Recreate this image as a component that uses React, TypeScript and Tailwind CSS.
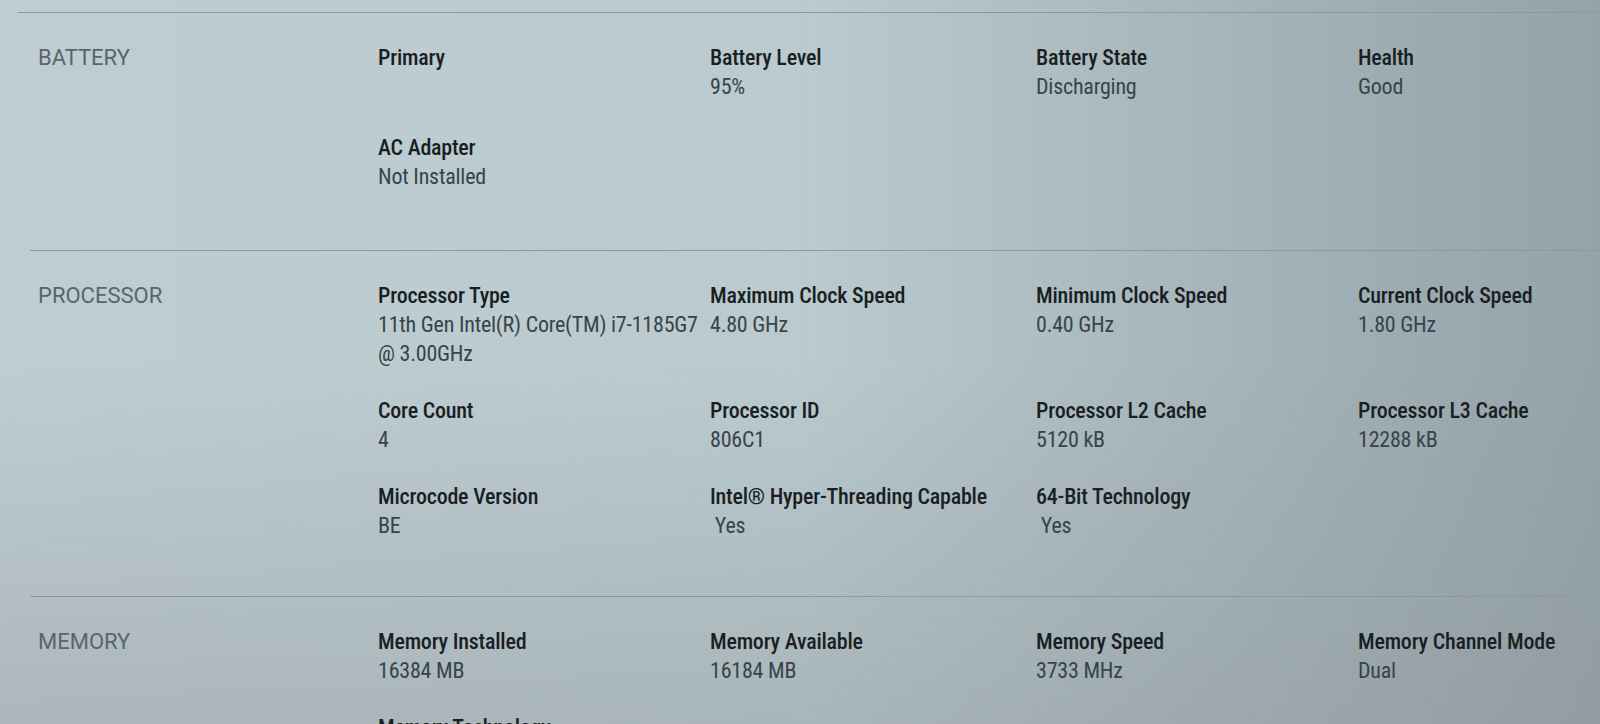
import React from 'react';

interface Field {
  label: string;
  value: string[];
}

interface SectionProps {
  title: string;
  fields: Field[];
  divider?: boolean;
  className?: string;
  gridClassName?: string;
}

const battery: Field[] = [
  { label: 'Primary', value: [] },
  { label: 'Battery Level', value: ['95%'] },
  { label: 'Battery State', value: ['Discharging'] },
  { label: 'Health', value: ['Good'] },
  { label: 'AC Adapter', value: ['Not Installed'] },
];

const processor: Field[] = [
  { label: 'Processor Type', value: ['11th Gen Intel(R) Core(TM) i7-1185G7', '@ 3.00GHz'] },
  { label: 'Maximum Clock Speed', value: ['4.80 GHz'] },
  { label: 'Minimum Clock Speed', value: ['0.40 GHz'] },
  { label: 'Current Clock Speed', value: ['1.80 GHz'] },
  { label: 'Core Count', value: ['4'] },
  { label: 'Processor ID', value: ['806C1'] },
  { label: 'Processor L2 Cache', value: ['5120 kB'] },
  { label: 'Processor L3 Cache', value: ['12288 kB'] },
  { label: 'Microcode Version', value: ['BE'] },
  { label: 'Intel® Hyper-Threading Capable', value: [' Yes'] },
  { label: '64-Bit Technology', value: [' Yes'] },
];

const memory: Field[] = [
  { label: 'Memory Installed', value: ['16384 MB'] },
  { label: 'Memory Available', value: ['16184 MB'] },
  { label: 'Memory Speed', value: ['3733 MHz'] },
  { label: 'Memory Channel Mode', value: ['Dual'] },
  { label: 'Memory Technology', value: ['LPDDR4x'] },
];

function InfoField({ field }: { field: Field }) {
  return (
    <div className="leading-[29px] [font-stretch:84%]">
      <div className="text-[22px] font-medium tracking-[-0.01em] text-[#191f23]">{field.label}</div>
      {field.value.map((line) => (
        <div key={line} className="text-[22px] tracking-[-0.01em] text-[#38434a] whitespace-pre">
          {line}
        </div>
      ))}
    </div>
  );
}

function Section({ title, fields, divider = true, className = '', gridClassName = 'gap-y-7' }: SectionProps) {
  return (
    <section className={`ml-[30px] flex pt-[30px] ${divider ? 'border-t border-[#8c999f]' : ''} ${className}`}>
      <div className="w-[348px] shrink-0 pl-2 text-[22px] leading-[29px] uppercase text-[#58656c] [font-stretch:92%]">
        {title}
      </div>
      <div className={`grid flex-1 grid-cols-[332px_326px_322px_1fr] ${gridClassName}`}>
        {fields.map((f) => (
          <InfoField key={f.label} field={f} />
        ))}
      </div>
    </section>
  );
}

export default function App() {
  return (
    <div className="relative h-[724px] overflow-hidden bg-gradient-to-r from-[#bfcdd3] via-[#bacace] to-[#94a2a9] font-['Roboto',sans-serif]">
      <div className="pointer-events-none absolute inset-0 bg-gradient-to-b from-transparent via-transparent to-[#8e969a]/40" />
      <div className="relative pt-3">
        <div className="ml-[18px] border-t border-[#8c999f]" />
        <Section title="Battery" fields={battery} divider={false} className="pb-[59px]" gridClassName="gap-y-8" />
        <Section title="Processor" fields={processor} className="pb-14" />
        <Section title="Memory" fields={memory} className="pb-14" />
      </div>
    </div>
  );
}
